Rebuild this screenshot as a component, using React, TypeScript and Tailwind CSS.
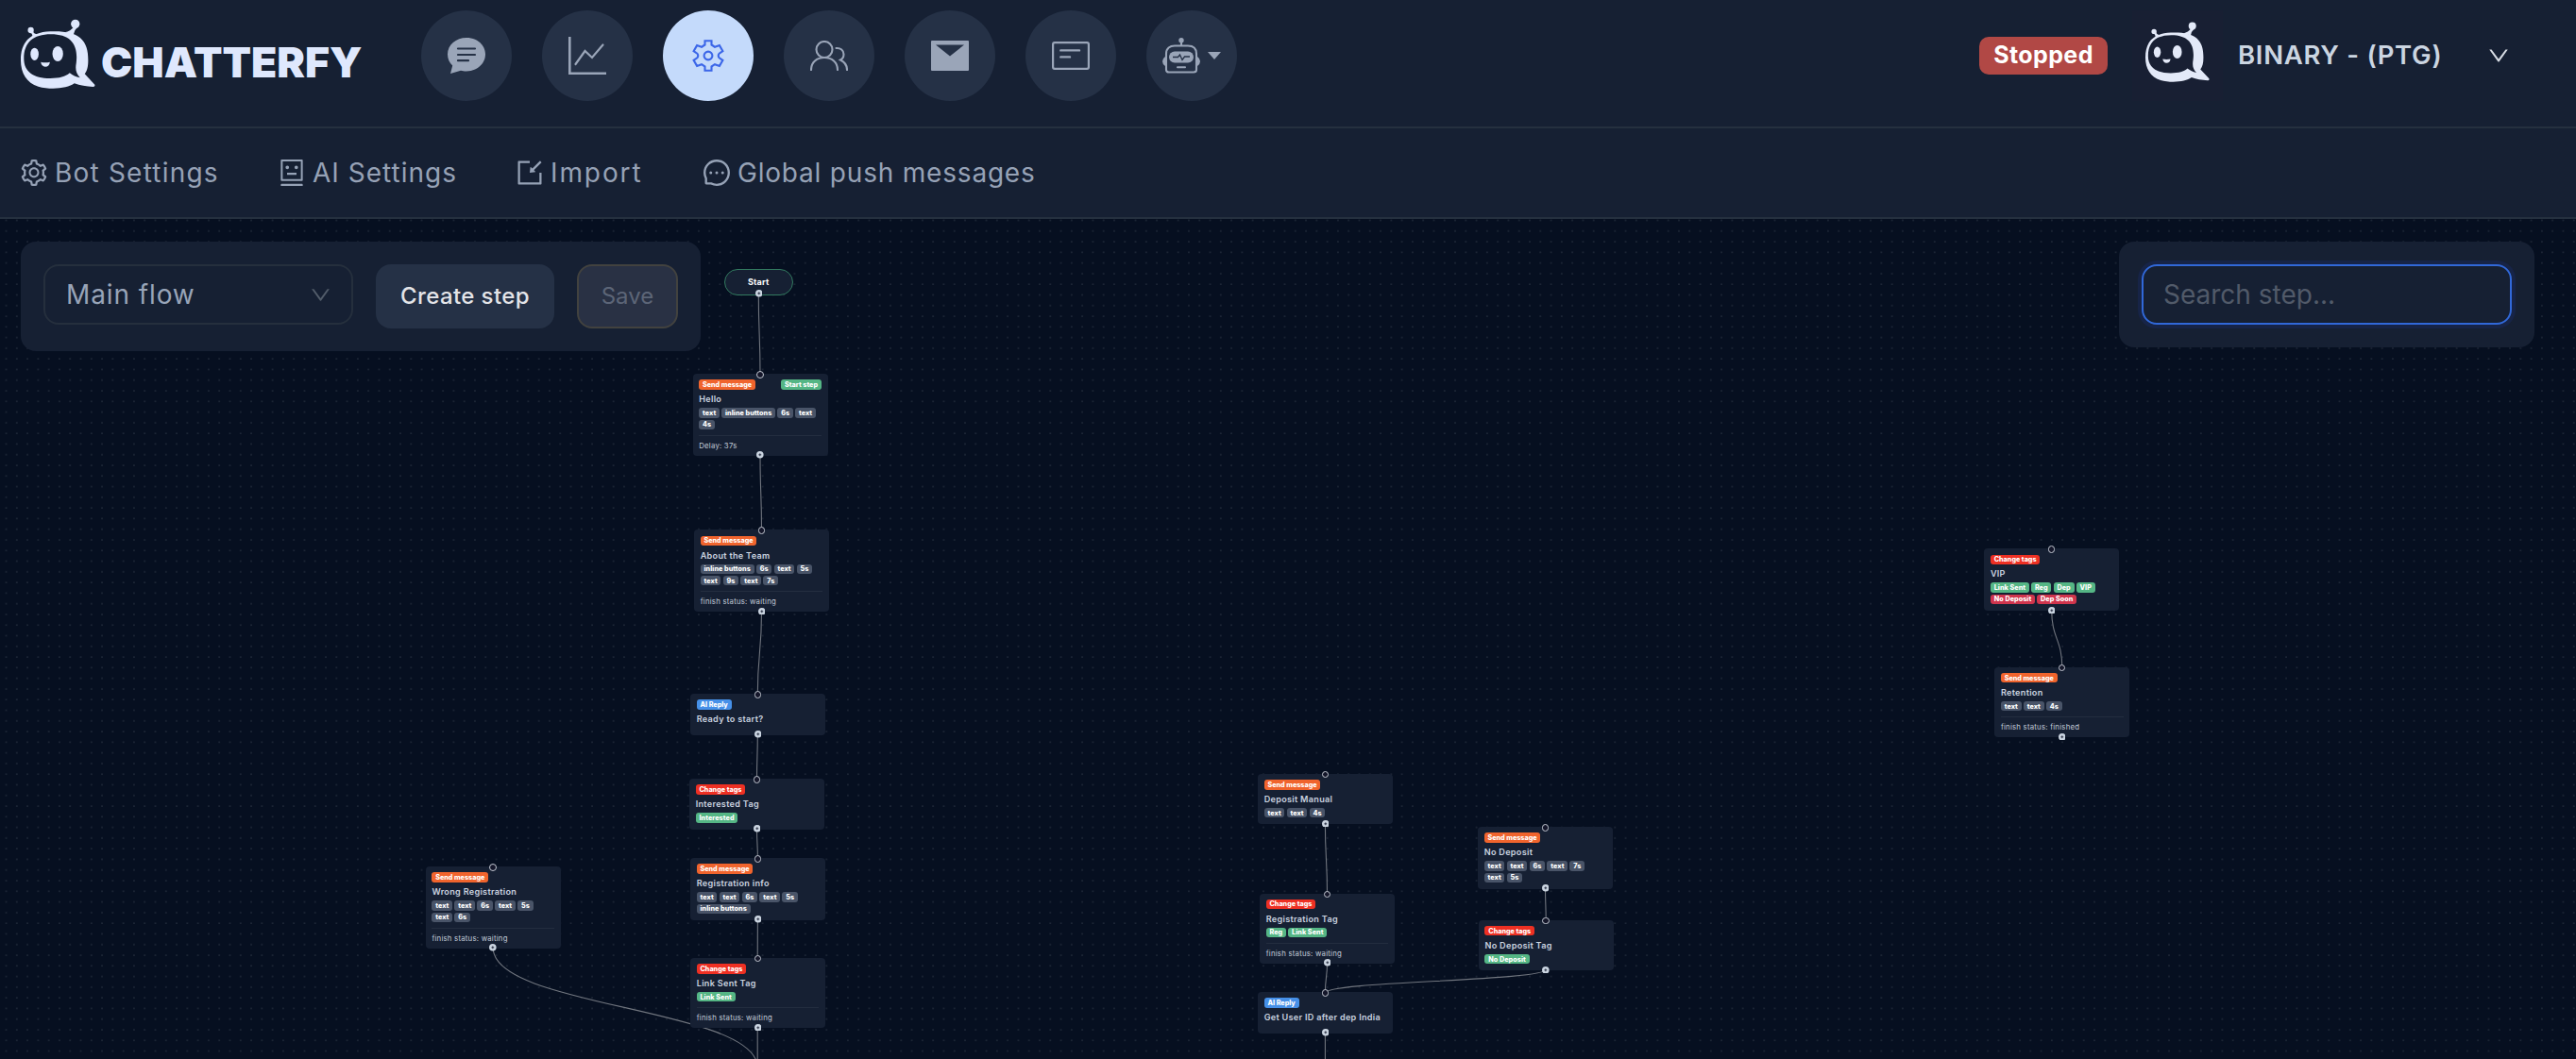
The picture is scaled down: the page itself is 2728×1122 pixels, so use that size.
import React from "react";
import {
  AiOutlineDown,
  AiOutlineImport,
  AiOutlineMessage,
  AiOutlineRobot,
  AiOutlineSetting,
} from "react-icons/ai";

type Tone = "gray" | "green" | "crimson";
type Kind = "Send message" | "Change tags" | "AI Reply";

interface Step {
  x: number;
  y: number;
  h: number;
  kind: Kind;
  title: string;
  tags: [string, Tone][];
  footer?: string;
  start?: boolean;
}

const gray = (...names: string[]): [string, Tone][] => names.map((n) => [n, "gray"]);
const green = (...names: string[]): [string, Tone][] => names.map((n) => [n, "green"]);

const STEPS: Step[] = [
  { x: 733.5, y: 396, h: 87, kind: "Send message", title: "Hello", tags: gray("text", "inline buttons", "6s", "text", "4s"), footer: "Delay: 37s", start: true },
  { x: 735, y: 561.3, h: 87, kind: "Send message", title: "About the Team", tags: gray("inline buttons", "6s", "text", "5s", "text", "9s", "text", "7s"), footer: "finish status: waiting" },
  { x: 731, y: 735, h: 43.5, kind: "AI Reply", title: "Ready to start?", tags: [] },
  { x: 730, y: 825, h: 53.5, kind: "Change tags", title: "Interested Tag", tags: green("Interested") },
  { x: 731, y: 909, h: 66, kind: "Send message", title: "Registration info", tags: gray("text", "text", "6s", "text", "5s", "inline buttons") },
  { x: 731, y: 1014.8, h: 74.5, kind: "Change tags", title: "Link Sent Tag", tags: green("Link Sent"), footer: "finish status: waiting" },
  { x: 450.7, y: 918, h: 87, kind: "Send message", title: "Wrong Registration", tags: gray("text", "text", "6s", "text", "5s", "text", "6s"), footer: "finish status: waiting" },
  { x: 1332, y: 819.8, h: 53.5, kind: "Send message", title: "Deposit Manual", tags: gray("text", "text", "4s") },
  { x: 1334, y: 946.5, h: 74.5, kind: "Change tags", title: "Registration Tag", tags: green("Reg", "Link Sent"), footer: "finish status: waiting" },
  { x: 1332, y: 1051, h: 43.5, kind: "AI Reply", title: "Get User ID after dep India", tags: [] },
  { x: 1565, y: 876, h: 66, kind: "Send message", title: "No Deposit", tags: gray("text", "text", "6s", "text", "7s", "text", "5s") },
  { x: 1565.8, y: 974.7, h: 53.5, kind: "Change tags", title: "No Deposit Tag", tags: green("No Deposit") },
  { x: 2101.2, y: 581.2, h: 66, kind: "Change tags", title: "VIP", tags: [...green("Link Sent", "Reg", "Dep", "VIP"), ["No Deposit", "crimson"], ["Dep Soon", "crimson"]] },
  { x: 2112.2, y: 706.7, h: 74.8, kind: "Send message", title: "Retention", tags: gray("text", "text", "4s"), footer: "finish status: finished" },
];

// Source and target points of each connection on the canvas.
const EDGES: [number, number, number, number][] = [
  [803.3, 311.7, 805, 396.8],
  [805, 482, 806.5, 562.3],
  [806.5, 648, 802.3, 736],
  [802.3, 777.5, 801.5, 826],
  [801.5, 877.5, 802.4, 910],
  [802.4, 974, 802.2, 1016],
  [802.2, 1088.5, 802.2, 1131],
  [522.2, 1004.3, 802.2, 1131],
  [1403.4, 872.3, 1405.5, 947.5],
  [1405.5, 1020.3, 1403.4, 1052],
  [1637.2, 1027, 1403.4, 1052],
  [1636.5, 940.7, 1637.2, 975.7],
  [1403.4, 1093, 1403.4, 1180],
  [2172.7, 646, 2183.8, 707.7],
];

const KIND_BG: Record<Kind, string> = {
  "Send message": "bg-[#f0642d]",
  "Change tags": "bg-[#ee3023]",
  "AI Reply": "bg-[#4690e8]",
};

const TONE_BG: Record<Tone, string> = {
  gray: "bg-[#495468]",
  green: "bg-[#55b685]",
  crimson: "bg-[#d0354d]",
};

const BADGE =
  "flex h-[10.4px] items-center rounded-[3px] px-[3.8px] text-[7.2px] leading-none font-extrabold text-white whitespace-nowrap";

function BotMark({ className }: { className: string }) {
  return (
    <svg viewBox="66 58 238 222" className={className} fill="currentColor" preserveAspectRatio="none">
      <path
        fillRule="evenodd"
        d="M160 98C200 96 236 101 256 119C275 136 281 158 281 190C281 210 278 222 270 233L302 267Q304 274 297 274C275 273 255 270 237 263C215 280 160 284 122 273C85 262 66 230 66 190C66 135 92 101 160 98ZM162 107C105 107 76 134 76 184C76 226 106 247 160 247C190 247 208 242 222 230C232 238 242 243 255 245C243 232 239 220 243 198C250 140 226 107 162 107Z"
      />
      <circle cx="240" cy="74" r="14" />
      <path d="M234 84L246 86Q236 94 234 108L206 101Q226 96 234 84Z" />
      <circle cx="98" cy="94" r="9.5" />
      <path d="M98 101L105 98Q108 106 120 108L103 116Q104 108 98 101Z" />
      <ellipse cx="110" cy="170" rx="13" ry="20" />
      <ellipse cx="184" cy="169" rx="17" ry="24" />
      <path d="M130 195Q144 198 159 195Q157 210 144 210Q132 209 130 195Z" />
    </svg>
  );
}

function ChatIcon() {
  return (
    <svg viewBox="0 0 40 38" className="h-[38px] w-10">
      <path fill="#9aa5b8" d="M20 0C31 0 40 7.5 40 17.5S31 35.500 20 35.500C17.500 35.500 15.500 35.200 14 34.700L3 38L5.200 29.500C2 26.500 0 22.500 0 17.500C0 7.500 9 0 20 0Z" />
      <path stroke="#253146" strokeWidth="2.200" strokeLinecap="round" d="M11 11.500H29M11 18H29M11 24.200H22" />
    </svg>
  );
}

function ChartIcon() {
  return (
    <svg viewBox="0 0 40 40" className="size-10" fill="none" stroke="#9aa5b8">
      <path strokeWidth="2.600" d="M1.300 0V38.700H40" />
      <path strokeWidth="2.200" strokeLinecap="round" d="M7.500 29L17.500 15L25 22L36.500 8.500" />
    </svg>
  );
}

function GearIcon() {
  return (
    <svg viewBox="-18 -18 36 36" className="size-9" fill="none" stroke="#3b66e8" strokeWidth="2.100">
      <circle r="4.400" />
      <path d="M-3.500 -15.800H3.500V-11.500Q5 -10.600 7 -9.200L11.900 -10.900L15.400 -4.900L11.700 -2.300Q9.800 0 11.700 2.300L15.400 4.900L11.900 10.900L7 9.200Q5 10.600 3.500 11.500V15.800H-3.500V11.500Q-5 10.600 -7 9.200L-11.900 10.900L-15.400 4.900L-11.700 2.300Q-9.800 0 -11.700 -2.300L-15.400 -4.900L-11.900 -10.900L-7 -9.200Q-5 -10.600 -3.500 -11.500Z" />
    </svg>
  );
}

function PeopleIcon() {
  return (
    <svg viewBox="0 0 40 32" className="h-8 w-10" fill="none" stroke="#9aa5b8" strokeWidth="2.100" strokeLinecap="round">
      <circle cx="15" cy="9.500" r="8.500" />
      <path d="M1 31C1 23 7 18 15 18S29 23 29 31" />
      <path d="M27.500 8C32 7.500 35.500 10.500 35.500 14.500C35.500 17.500 34 19.500 32 20.500C36 22.500 39 26 39 31" />
    </svg>
  );
}

function MailIcon() {
  return (
    <svg viewBox="0 0 40 32" className="h-8 w-10">
      <rect width="40" height="32" rx="1" fill="#9aa5b8" />
      <path d="M5 4.500H35L20 16.500Z" fill="#253146" />
    </svg>
  );
}

function CardIcon() {
  return (
    <svg viewBox="0 0 40 30" className="h-[30px] w-10" fill="none" stroke="#9aa5b8">
      <rect x="1.100" y="1.100" width="37.800" height="27.800" rx="1.800" strokeWidth="2.200" />
      <path strokeWidth="2.400" strokeLinecap="round" d="M9.300 9.400H29M9.300 16.400H19" />
    </svg>
  );
}

function RobotIcon() {
  return (
    <svg viewBox="0 0 40 38" className="h-[38px] w-10" fill="none" stroke="#9aa5b8" strokeWidth="2.100">
      <circle cx="20" cy="2.700" r="2.700" fill="#9aa5b8" stroke="none" />
      <path d="M20 3V8" />
      <path d="M4 34V17C4 11 8 8.500 13 8.500H27C32 8.500 36 11 36 17V34Q36 36.500 33 36.500H7Q4 36.500 4 34Z" />
      <path d="M3 20Q0 22 0 25T3 30ZM37 20Q40 22 40 25T37 30Z" fill="#9aa5b8" stroke="none" />
      <rect x="7" y="14.500" width="26" height="12" rx="6" fill="#9aa5b8" stroke="none" />
      <path stroke="#253146" strokeWidth="1.300" d="M11 20.500H16.500L18.500 18L21 23.500L23.500 20H29" />
      <path strokeLinecap="round" d="M16 31.300H24" />
    </svg>
  );
}

function NavButton({ active, children }: { active?: boolean; children: React.ReactNode }) {
  return (
    <button
      className={
        active
          ? "flex size-24 items-center justify-center rounded-full bg-[#c4dafb]"
          : "flex size-24 items-center justify-center rounded-full bg-[#253146]"
      }
    >
      {children}
    </button>
  );
}

function Header() {
  return (
    <header className="flex h-[136px] items-start border-b-2 border-[#25303f] bg-[#162033]">
      <div className="flex w-[446px] pt-5 pl-[22px] text-[#dfe8fd]">
        <BotMark className="h-[74px] w-[79px]" />
        <span className="mt-[18.500px] ml-[6px] text-[44.500px] leading-[54px] font-black">CHATTERFY</span>
      </div>
      <nav className="flex gap-8 pt-[11px]">
        <NavButton><ChatIcon /></NavButton>
        <NavButton><ChartIcon /></NavButton>
        <NavButton active><GearIcon /></NavButton>
        <NavButton><PeopleIcon /></NavButton>
        <NavButton><MailIcon /></NavButton>
        <NavButton><CardIcon /></NavButton>
        <NavButton>
          <span className="flex items-center gap-2">
            <RobotIcon />
            <svg viewBox="0 0 14 8" className="h-2 w-3.5" fill="#9aa5b8"><path d="M0 0H14L7 8Z" /></svg>
          </span>
        </NavButton>
      </nav>
      <div className="mt-[11px] ml-auto flex h-24 items-center pr-[69px]">
        <span className="flex h-10 w-[136px] items-center justify-center rounded-[10px] bg-[#b14845] text-[25px] font-bold tracking-[0.4px] text-white">Stopped</span>
        <span className="ml-[26px] flex size-24 items-center justify-center bg-[#181f33] text-[#e3e9f8]">
          <BotMark className="mb-2 h-16 w-[68px]" />
        </span>
        <span className="ml-[16px] w-[217px] text-[27.500px] font-semibold tracking-[0.700px] text-[#cbd5e1] whitespace-nowrap">BINARY - (PTG)</span>
        <AiOutlineDown className="ml-[46px] size-[26px] text-[#d7dce4]" />
      </div>
    </header>
  );
}

function SubNav() {
  return (
    <nav className="flex h-24 items-center border-b-2 border-[#25303f] bg-[#162033] pl-5 text-[28px] tracking-[0.800px] text-[#96a2b6] *:flex *:items-center *:gap-1.5">
      <a className="w-[273px] tracking-[1.200px]"><AiOutlineSetting className="size-8" />Bot Settings</a>
      <a className="w-[252px] tracking-[1px]"><AiOutlineRobot className="size-8" />AI Settings</a>
      <a className="w-[198px] tracking-[1.900px]"><AiOutlineImport className="size-8" />Import</a>
      <a><AiOutlineMessage className="size-8" />Global push messages</a>
    </nav>
  );
}

function StepCard({ step }: { step: Step }) {
  return (
    <article
      className="absolute w-[143px] rounded-[4px] bg-[#162033] px-[6.7px] pt-[6.400px]"
      style={{ left: step.x, top: step.y - 232, height: step.h }}
    >
      <span className="absolute -top-[3px] left-[67.700px] size-[7.600px] rounded-full border border-[#c3c8d2] bg-[#14162a]" />
      <div className="flex justify-between">
        <span className={`${BADGE} ${KIND_BG[step.kind]}`}>{step.kind}</span>
        {step.start && <span className={`${BADGE} bg-[#55b685]`}>Start step</span>}
      </div>
      <h3 className="mt-[3.500px] h-[13px] text-[9.100px] leading-[13px] font-semibold tracking-[0.300px] whitespace-nowrap text-[#ccd4e0]">{step.title}</h3>
      {step.tags.length > 0 && (
        <div className="mt-[3px] mr-1 flex flex-wrap gap-x-[2.200px] gap-y-[2px] tracking-[0.060px]">
          {step.tags.map(([name, tone], i) => (
            <span key={i} className={`${BADGE} ${TONE_BG[tone]}`}>{name}</span>
          ))}
        </div>
      )}
      {step.footer && (
        <p className="mt-[5.500px] border-t border-[#232d3f] pt-[5px] text-[7.800px] leading-[11px] tracking-[0.220px] whitespace-nowrap text-[#c3ccd9]">
          {step.footer}
        </p>
      )}
      <PlusHandle className="absolute -bottom-[3px] left-[67.700px] size-[7.600px]" />
    </article>
  );
}

function PlusHandle({ className }: { className: string }) {
  return (
    <svg viewBox="0 0 8 8" className={className}>
      <circle cx="4" cy="4" r="4" fill="#cbd5e1" />
      <path d="M2.500 4H5.500M4 2.500V5.500" stroke="#1d2538" strokeWidth=".9" />
    </svg>
  );
}

function Canvas() {
  return (
    <main className="relative h-[890px] overflow-hidden bg-[#060f20]">
      <svg className="absolute inset-0 size-full" viewBox="0 232 2728 890" fill="none">
        <defs>
          <pattern id="dots" x="0.9" y="2.1" width="11.283" height="11.283" patternUnits="userSpaceOnUse">
            <circle cx="5.640" cy="5.640" r="0.560" fill="#5a6270" />
          </pattern>
        </defs>
        <rect y="232" width="2728" height="890" fill="url(#dots)" />
        {EDGES.map(([x1, y1, x2, y2], i) => {
          const m = (y1 + y2) / 2;
          return <path key={i} d={`M${x1} ${y1}C${x1} ${m} ${x2} ${m} ${x2} ${y2}`} stroke="#70757e" strokeWidth="1.100" />;
        })}
      </svg>

      <div className="absolute top-[53px] left-[767px] flex h-[28px] w-[72.500px] items-center justify-center rounded-full border border-[#327a5f] bg-[#162033] text-[9px] font-bold tracking-[0.200px] text-white">
        Start
        <PlusHandle className="absolute -bottom-[3px] left-[31.500px] size-[7.600px]" />
      </div>

      {STEPS.map((s, i) => (
        <StepCard key={i} step={s} />
      ))}

      <section className="absolute top-6 left-[22px] flex h-[116px] w-[720px] items-start gap-6 rounded-2xl bg-[#162033] p-6">
        <button className="flex h-16 w-[328px] items-center justify-between rounded-2xl border-2 border-[#252f3d] pr-5 pl-[22px] text-[28px] tracking-[0.900px] text-[#98a4b8]">
          Main flow
          <AiOutlineDown className="size-[25px] text-[#525c6a]" />
        </button>
        <button className="flex h-[68px] w-[189px] items-center justify-center rounded-2xl bg-[#253146] text-[24px] font-medium tracking-[0.400px] text-[#e3e4e8]">Create step</button>
        <button className="flex h-[68px] w-[107px] items-center justify-center rounded-2xl border-2 border-[#42423f] bg-[#293144] text-[24px] text-[#5c6577]">Save</button>
      </section>

      <section className="absolute top-6 right-11 h-28 w-[440px] rounded-2xl bg-[#162033] p-6">
        <div className="flex h-16 items-center rounded-2xl border-2 border-[#3168d8] px-[21px] text-[28px] text-[#515a69] shadow-[0_0_0_4px_#172447]">
          Search step...
        </div>
      </section>
    </main>
  );
}

export default function App() {
  return (
    <div className="h-[1122px] w-[2728px] overflow-hidden bg-[#060f20] font-[Inter,sans-serif]">
      <Header />
      <SubNav />
      <Canvas />
    </div>
  );
}
